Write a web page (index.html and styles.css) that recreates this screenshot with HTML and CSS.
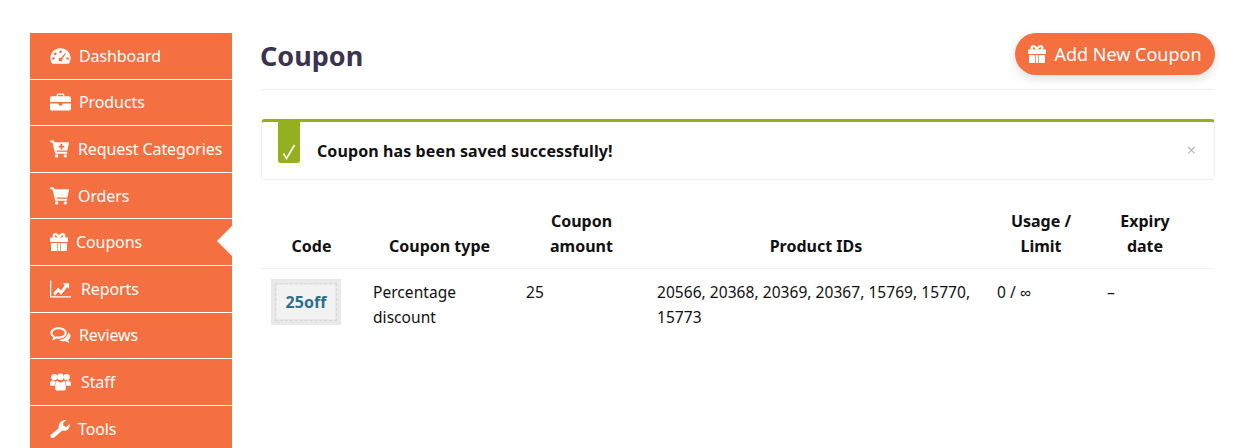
FILE: index.html
```html
<!DOCTYPE html>
<html lang="en">
<head>
    <meta charset="UTF-8">
    <title>Coupon</title>
    <link rel="stylesheet" href="styles.css">
</head>
<body>
    <div class="layout">
        <ul class="side-nav">
            <li><a>
                <svg class="nav-icon" viewBox="0 0 22 18"><path fill-rule="evenodd" d="M11 1C5 1 .5 5.600.5 11c0 2 .5 3.900 1.500 5.500.3.400.7.500 1 .5h16c.4 0 .8-.1 1-.5 1-1.600 1.500-3.500 1.500-5.500C21.500 5.600 17 1 11 1zM11 3.200a1.400 1.400 0 1 1 0 2.800 1.400 1.400 0 0 1 0-2.800zM5.500 5.400a1.400 1.400 0 1 1 0 2.800 1.400 1.400 0 0 1 0-2.800zM3.600 10.200a1.400 1.400 0 1 1 0 2.800 1.400 1.400 0 0 1 0-2.800zM18.400 10.200a1.400 1.400 0 1 1 0 2.800 1.400 1.400 0 0 1 0-2.800zM15.800 5.800l1 .7-3.900 5.600c.3.800.1 1.700-.6 2.300-.9.700-2.200.5-2.800-.4-.7-.9-.5-2.200.4-2.800.6-.5 1.400-.5 2-.3z"/></svg>
                <span>Dashboard</span></a></li>
            <li><a>
                <svg class="nav-icon" viewBox="0 0 22 18"><path fill-rule="evenodd" d="M7 3V1.500C7 .7 7.700 0 8.500 0h5c.8 0 1.500.7 1.500 1.500V3h5c1 0 2 1 2 2v4H0V5c0-1 1-2 2-2zM8.500 1.500V3h5V1.500z"/><path d="M0 10.500h9V12c0 .4.300.7.700.7h2.600c.4 0 .7-.3.700-.7v-1.500h9V16c0 1-1 2-2 2H2c-1 0-2-1-2-2z"/></svg>
                <span>Products</span></a></li>
            <li><a class="tight">
                <svg class="nav-icon" viewBox="0 0 22 18"><path fill-rule="evenodd" d="M0 0h4l.6 2H20l-1.800 8.500H6.800l.4 1.500H18v2H5.500L2.500 2H0zM11 3.500v2H9v2h2v2h2v-2h2v-2h-2v-2z"/><circle cx="7" cy="16.300" r="1.700"/><circle cx="16" cy="16.300" r="1.700"/></svg>
                <span>Request Categories</span></a></li>
            <li><a class="tight">
                <svg class="nav-icon" viewBox="0 0 22 18"><path d="M0 0h4l.6 2H20l-1.800 8.500H6.800l.4 1.500H18v2H5.500L2.500 2H0z"/><circle cx="7" cy="16.300" r="1.700"/><circle cx="16" cy="16.300" r="1.700"/></svg>
                <span>Orders</span></a></li>
            <li class="active"><a>
                <svg class="nav-icon small" viewBox="0 0 18 18"><use href="#gift"/></svg>
                <span>Coupons</span></a></li>
            <li><a class="wide">
                <svg class="nav-icon" viewBox="0 0 22 18"><path d="M0 0h1.300v16.700H22V18H0z"/><path d="M3.500 13.500l5-6 3 3 4-5.500-2-2H20v6l-2-2-6.300 8-3-3-3.500 4z"/></svg>
                <span>Reports</span></a></li>
            <li><a>
                <svg class="nav-icon" viewBox="0 0 22 18"><path fill-rule="evenodd" d="M9 1c5 0 8.500 2.700 8.500 6S14 13 9 13c-.9 0-1.800-.1-2.600-.3C5 13.800 3.500 14.300 2 14.300c.8-.8 1.400-1.700 1.600-2.800C1.700 10.400.5 8.800.5 7 .5 3.700 4 1 9 1zM9 3C5 3 2.500 5 2.500 7c0 1.300 1 2.500 2.800 3.300l-.1 1c.5-.2 1-.5 1.400-.9 .8.200 1.600.3 2.400.3 4 0 6.500-2 6.500-3.700S13 3 9 3z"/><path d="M19 6.500c1.600 1 2.500 2.300 2.500 3.800 0 1.500-1 2.900-2.600 3.800.2 1.100.8 2 1.600 2.900-1.600 0-3-.6-4.300-1.700-.7.200-1.400.2-2.200.2-1.800 0-3.400-.5-4.600-1.300 4.600 0 9-2.500 9.600-7.700z"/></svg>
                <span>Reviews</span></a></li>
            <li><a class="wide">
                <svg class="nav-icon" viewBox="0 0 22 18"><circle cx="4.500" cy="3.800" r="3.300"/><circle cx="17.500" cy="3.800" r="3.300"/><circle cx="11" cy="3.500" r="3.500"/><path d="M0 12c0-3 1-4.500 3-4.500 1 .8 2 1 2.800.7-.5 1-.8 2.300-.8 3.800v1H1.500C.5 13 0 12.800 0 12zM22 12c0-3-1-4.500-3-4.500-1 .8-2 1-2.800.7.500 1 .8 2.300.8 3.800v1h3.500c1 0 1.500-.2 1.500-1zM7.500 8c1.100 1 2.300 1.500 3.500 1.500S13.400 9 14.500 8c1.500 0 2 2 2 5v3c0 1-.7 2-2 2h-7c-1.300 0-2-1-2-2v-3c0-3 .5-5 2-5z"/></svg>
                <span>Staff</span></a></li>
            <li><a class="tight">
                <svg class="nav-icon" viewBox="0 0 20 18"><path d="M2 18c-1.200 0-2-.9-2-2 0-.6.200-1.100.6-1.400l7.600-6.300C7.800 5 9 2.500 11 1.200 12.500.2 14.500-.1 16-.1l-3.500 3.200.5 3 3 .8 3.300-3.200c.3 2.200-.4 4.300-2 5.700-1.500 1.300-3.500 1.700-5.400 1.100L4 17.200c-.5.500-1.200.8-2 .8z"/></svg>
                <span>Tools</span></a></li>
        </ul>

        <main class="content">
            <div class="page-head">
                <h1>Coupon</h1>
                <a class="add-btn">
                    <svg class="btn-icon" viewBox="0 0 18 18"><use href="#gift"/></svg>
                    Add New Coupon
                </a>
            </div>

            <div class="notice">
                <div class="notice-badge">
                    <svg viewBox="0 0 14 16"><path d="M1.500 9.500l3 5L12.500 1" fill="none" stroke="#fff" stroke-width="1.600"/></svg>
                </div>
                <strong>Coupon has been saved successfully!</strong>
                <span class="notice-close">×</span>
            </div>

            <table class="coupons">
                <thead>
                    <tr>
                        <th class="col-code">Code</th>
                        <th class="col-type">Coupon type</th>
                        <th class="col-amount">Coupon amount</th>
                        <th class="col-ids">Product IDs</th>
                        <th class="col-usage">Usage / Limit</th>
                        <th class="col-expiry">Expiry date</th>
                    </tr>
                </thead>
                <tbody>
                    <tr>
                        <td class="cell-thumb"><div class="coupon-thumb"><span>25off</span></div></td>
                        <td>Percentage discount</td>
                        <td>25</td>
                        <td>20566, 20368, 20369, 20367, 15769, 15770, 15773</td>
                        <td>0 / ∞</td>
                        <td>–</td>
                    </tr>
                </tbody>
            </table>
        </main>
    </div>

    <svg class="sprite" width="0" height="0">
        <symbol id="gift" viewBox="0 0 18 18">
            <path fill-rule="evenodd" d="M5.500 0C7 0 8.200 1 9 2.800 9.800 1 11 0 12.500 0 14.200 0 15.500 1.200 15.500 2.700c0 .6-.2 1.200-.5 1.800h2c.6 0 1 .4 1 1V9H0V5.500c0-.6.4-1 1-1h2c-.3-.6-.5-1.200-.5-1.800C2.500 1.200 3.800 0 5.500 0zM5.500 2.200c-.6 0-.9.2-.9.5 0 .9.900 1.800 2 1.800h1C7.100 3.300 6.400 2.200 5.500 2.200zM12.500 2.200c-.9 0-1.600 1.100-2.100 2.300h1c1.100 0 2-.9 2-1.800 0-.3-.3-.5-.9-.5z"/>
            <path d="M1 10h6.300v8H2c-.6 0-1-.4-1-1zM10.700 10H17v7c0 .6-.4 1-1 1h-5.300zM8 10h2v8H8z"/>
        </symbol>
    </svg>
</body>
</html>
```

FILE: styles.css
```css
* {
    box-sizing: border-box;
}
body {
    margin: 0;
    height: 448px;
    overflow: hidden;
    background: #fff;
    color: #111;
    font-family: "Noto Sans", sans-serif;
    font-size: 15.5px;
}
.layout {
    display: flex;
    align-items: flex-start;
    gap: 29px;
    padding: 33px 38px 0 30px;
}
.sprite {
    display: none;
}

/* sidebar */
.side-nav {
    flex: 0 0 202px;
    margin: 0;
    padding: 0;
    list-style: none;
    background: #f47041;
}
.side-nav li {
    position: relative;
    height: 46.6px;
    border-bottom: 1px solid #fff;
}
.side-nav li:last-child {
    border-bottom: 0;
}
.side-nav a {
    display: flex;
    align-items: center;
    gap: 8px;
    height: 100%;
    padding-left: 20px;
    color: #fff;
    font-size: 16px;
    letter-spacing: -0.1px;
}
.side-nav a.tight {
    gap: 7px;
}
.side-nav a.wide {
    gap: 10px;
}
.nav-icon {
    flex: none;
    width: 21px;
    height: 18px;
    fill: #fff;
}
.nav-icon.small {
    width: 18px;
}
.side-nav li.active::after {
    content: "";
    position: absolute;
    right: 0;
    top: 7px;
    border: 15px solid transparent;
    border-left: 0;
    border-right-color: #fff;
}

/* header */
.content {
    flex: 1;
    min-width: 0;
}
.page-head {
    display: flex;
    justify-content: space-between;
    align-items: flex-start;
    height: 57px;
    border-bottom: 1px solid #eee;
}
.page-head h1 {
    margin: 3px 0 0 -1px;
    color: #3a3450;
    font-size: 27px;
    line-height: 40px;
    font-weight: 700;
}
.add-btn {
    display: flex;
    align-items: center;
    justify-content: center;
    gap: 8px;
    width: 200px;
    height: 42px;
    border-radius: 21px;
    background: #f47041;
    box-shadow: 0 4px 10px rgba(0,0,0,0.12);
    color: #fff;
    font-size: 18px;
}
.btn-icon {
    width: 18px;
    height: 18px;
    fill: #fff;
}

/* notice */
.notice {
    position: relative;
    display: flex;
    align-items: center;
    height: 61px;
    margin-top: 29px;
    padding-left: 55px;
    border: 1px solid #f0f0f0;
    border-top: 3px solid #94b01f;
    border-radius: 4px;
}
.notice strong {
    font-size: 16px;
    font-weight: 700;
    letter-spacing: 0.1px;
}
.notice-badge {
    position: absolute;
    left: 16px;
    top: -1px;
    display: flex;
    align-items: flex-end;
    justify-content: center;
    width: 22px;
    height: 42px;
    padding-bottom: 3px;
    border-radius: 0 0 3px 3px;
    background: #94b01f;
}
.notice-badge svg {
    width: 14px;
    height: 16px;
}
.notice-close {
    position: absolute;
    right: 18px;
    top: 17px;
    color: #bbb;
    font-size: 16px;
    line-height: 22px;
}

/* table */
.coupons {
    width: 100%;
    margin-top: 16px;
    border-collapse: collapse;
    table-layout: fixed;
    line-height: 25px;
}
.coupons th {
    padding: 13px 10px 9px;
    border-bottom: 1px solid #f2f2f2;
    vertical-align: bottom;
    text-align: center;
    font-size: 16px;
    font-weight: 700;
}
.coupons td {
    padding: 11px 11px 10px;
    vertical-align: top;
    letter-spacing: 0.05px;
}
.coupons td.cell-thumb {
    padding: 10px;
}
.col-code { width: 101px; }
.coupons th.col-type { width: 153px; padding-left: 12px; }
.coupons th.col-amount { width: 131px; padding-left: 12px; }
.col-ids { width: 340px; }
.col-usage { width: 110px; }
.coupons th.col-expiry { width: 119px; padding-right: 31px; }
.coupon-thumb {
    display: flex;
    align-items: center;
    justify-content: center;
    width: 70px;
    height: 46px;
    border: 6px solid #e9e9e9;
    outline: 1px dashed #d8d8d8;
    outline-offset: -5px;
    background: #f2f2f2;
    color: #2b6f8a;
    font-size: 16px;
    font-weight: 700;
}
```
